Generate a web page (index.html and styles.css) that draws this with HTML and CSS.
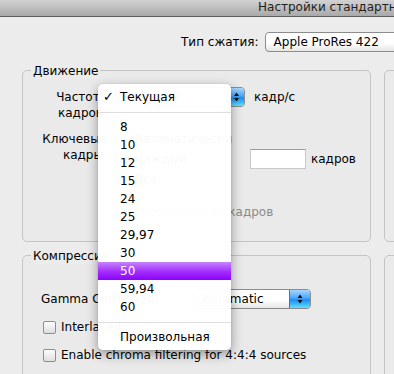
FILE: index.html
```html
<!DOCTYPE html>
<html lang="ru">
<head>
  <meta charset="UTF-8">
  <meta name="viewport" content="width=device-width, initial-scale=1.0">
  <title>Настройки стандартного сжатия видео</title>
  <link rel="stylesheet" href="styles.css">
</head>
<body>
  <div class="titlebar">Настройки стандартного сжатия видео</div>

  <div class="codec-row">
    <span>Тип сжатия:</span>
    <div class="popup codec-popup">Apple ProRes 422</div>
  </div>

  <div class="panels">
    <!-- Движение -->
    <div class="group">
      <div class="group-title">Движение</div>
      <div class="row rate-row">
        <div class="lbl">Частота<br>кадров:</div>
        <div class="popup rate-popup">
          <span class="popup-text">Текущая</span>
          <svg class="stepper" width="15" height="18" viewBox="0 0 15 18"><path d="M7.5 4.5 L10 8 H5 Z M7.5 13.5 L10 10 H5 Z" fill="#111"/></svg>
        </div>
        <span class="unit">кадр/с</span>
      </div>
      <div class="row key-row">
        <div class="lbl">Ключевые<br>кадры:</div>
        <div class="options">
          <div class="opt"><span class="radio"></span>Автоматически</div>
          <div class="opt"><span class="radio"></span><span class="every">Каждый</span><span class="field"></span><span class="field-unit">кадров</span></div>
          <div class="opt"><span class="radio on"></span>Все</div>
        </div>
      </div>
      <div class="opt reorder"><span class="check"></span><span class="off">Упорядочение кадров</span></div>
    </div>
    <div class="group"></div>

    <!-- Компрессия -->
    <div class="group">
      <div class="group-title">Компрессия</div>
      <div class="gamma-row">
        <span class="gamma-lbl">Gamma Correction:</span>
        <div class="popup gamma-popup">
          <span class="popup-text">Automatic</span>
          <svg class="stepper" width="20" height="18" viewBox="0 0 20 18"><path d="M10 4.5 L12.5 8 H7.5 Z M10 13.5 L12.5 10 H7.5 Z" fill="#111"/></svg>
        </div>
      </div>
      <div class="check-row"><span class="check"></span>Interlaced</div>
      <div class="check-row"><span class="check"></span>Enable chroma filtering for 4:4:4 sources</div>
    </div>
    <div class="group"></div>
  </div>

  <!-- открытое меню частоты кадров -->
  <ul class="menu">
    <li><span class="mark">✓</span>Текущая</li>
    <li class="sep"></li>
    <li>8</li>
    <li>10</li>
    <li>12</li>
    <li>15</li>
    <li>24</li>
    <li>25</li>
    <li>29,97</li>
    <li>30</li>
    <li class="sel">50</li>
    <li>59,94</li>
    <li>60</li>
    <li class="sep"></li>
    <li>Произвольная</li>
  </ul>
</body>
</html>
```

FILE: styles.css
```css
body {
  margin: 0;
  width: 394px;
  height: 374px;
  overflow: hidden;
  position: relative;
  background: #ececec;
  font-family: "DejaVu Sans", sans-serif;
  font-size: 12px;
  color: #000;
}

.titlebar {
  height: 16px;
  line-height: 15px;
  padding-left: 258px;
  background: linear-gradient(#d2d2d2, #a9a9a9);
  border-bottom: 1px solid #5e5e5e;
  white-space: nowrap;
  overflow: hidden;
  color: #1e1e1e;
}

.codec-row {
  display: flex;
  align-items: center;
  gap: 6px;
  height: 21px;
  margin-top: 14px;
  padding-left: 181px;
  white-space: nowrap;
}

.popup {
  display: flex;
  box-sizing: border-box;
  border: 1px solid #8c8c8c;
  border-radius: 4px;
  background: linear-gradient(#ffffff, #ffffff 55%, #e6e6e6);
  overflow: hidden;
  flex: none;
}

.codec-popup {
  width: 170px;
  height: 20px;
  line-height: 18px;
  padding-left: 8px;
}

.popup-text {
  flex: 1;
  padding-left: 8px;
  line-height: 18px;
  white-space: nowrap;
}

.stepper {
  flex: none;
  background: linear-gradient(#a6d6ff, #4aa6fb 45%, #1c8cf5 55%, #5fe2ff);
  border-left: 1px solid #6d5bd6;
}

.panels {
  display: grid;
  grid-template-columns: 349px 60px;
  grid-template-rows: 172px 200px;
  column-gap: 13px;
  row-gap: 13px;
  margin-top: 18px;
  padding-left: 22px;
}

.group {
  box-sizing: border-box;
  border: 1px solid #c4c4c4;
  border-radius: 5px;
  background: #eaeaea;
}

.group-title {
  width: max-content;
  margin: -7px 0 0 8px;
  padding: 0 2px;
  line-height: 15px;
  background: #ececec;
}

.row {
  display: flex;
  align-items: flex-start;
}

.rate-row {
  margin-top: 8px;
}

.lbl {
  flex: none;
  width: 84px;
  margin-top: 2px;
  text-align: right;
  line-height: 16px;
}

.rate-popup {
  width: 130px;
  height: 20px;
  margin-left: 8px;
}

.unit {
  margin-left: 9px;
  line-height: 20px;
}

.key-row {
  margin-top: 8px;
}

.options {
  margin-left: 8px;
}

.opt {
  display: flex;
  align-items: center;
  height: 20px;
  white-space: nowrap;
}

.radio {
  flex: none;
  box-sizing: border-box;
  width: 14px;
  height: 14px;
  margin-right: 6px;
  border: 1px solid #8e8e8e;
  border-radius: 50%;
  background: linear-gradient(#fdfdfd, #dcdcdc);
}

.radio.on {
  background: radial-gradient(circle, #222 2px, transparent 2.5px), linear-gradient(#a6d6ff, #2f97f6);
}

.every {
  width: 109px;
}

.field {
  box-sizing: border-box;
  width: 56px;
  height: 20px;
  margin-left: 6px;
  background: #fff;
  border: 1px solid #c9c9c9;
  border-top-color: #9a9a9a;
}

.field-unit {
  margin-left: 5px;
}

.reorder {
  margin: 13px 0 0 92px;
}

.check {
  flex: none;
  box-sizing: border-box;
  width: 13px;
  height: 13px;
  margin-right: 6px;
  border: 1px solid #8e8e8e;
  border-radius: 2px;
  background: linear-gradient(#fdfdfd, #dedede);
}

.off {
  color: #8a8a8a;
}

.gamma-row {
  display: flex;
  align-items: center;
  height: 20px;
  margin-top: 25px;
  padding-left: 18px;
}

.gamma-lbl {
  width: 152px;
  flex: none;
}

.gamma-popup {
  width: 118px;
  height: 20px;
}

.check-row {
  display: flex;
  align-items: center;
  height: 18px;
  margin-top: 9px;
  padding-left: 20px;
  white-space: nowrap;
}

.check-row + .check-row {
  margin-top: 10px;
}

.check-row .check {
  margin-right: 5px;
}

/* popup menu over the dialog */
.menu {
  position: absolute;
  left: 98px;
  top: 84px;
  width: 133px;
  margin: 0;
  padding: 4px 0;
  list-style: none;
  background: rgba(255, 255, 255, 0.975);
  border-radius: 5px;
  box-shadow: 0 4px 12px rgba(0, 0, 0, 0.38), 0 0 1px rgba(0, 0, 0, 0.3);
}

.menu li {
  height: 18px;
  line-height: 18px;
  padding-left: 22px;
}

.menu .mark {
  display: inline-block;
  width: 17px;
  margin-left: -17px;
  font-weight: bold;
  font-size: 13px;
}

.menu .sep {
  height: 12px;
  padding: 0;
  background: linear-gradient(#dedede, #dedede) no-repeat center / 100% 1px;
}

.menu .sel {
  background: linear-gradient(#c683fb, #a22cfd 55%, #8e00ff);
  color: #fff;
}
```
